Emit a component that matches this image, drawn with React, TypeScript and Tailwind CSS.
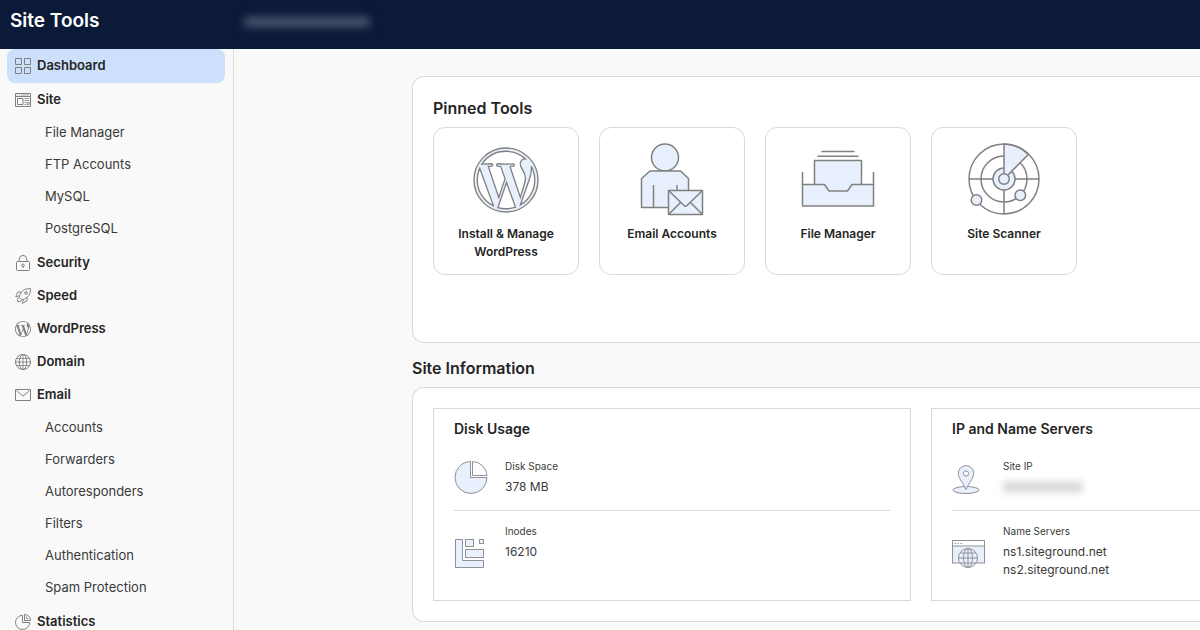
import type { ReactNode } from "react";
import { SiWordpress } from "react-icons/si";

const LINE = "#808080";
const TINT = "#e8f0fd";

type NavItem = {
  label: string;
  icon: ReactNode;
  active?: boolean;
  children?: string[];
};

/* Sidebar icons */

function SmallIcon({ children }: { children: ReactNode }) {
  return (
    <svg
      width="16"
      height="16"
      viewBox="0 0 16 16"
      fill="none"
      stroke={LINE}
      strokeWidth="1"
      strokeLinejoin="round"
      aria-hidden="true"
    >
      {children}
    </svg>
  );
}

const NAV: NavItem[] = [
  {
    label: "Dashboard",
    active: true,
    icon: (
      <SmallIcon>
        <rect x="0.5" y="0.5" width="6" height="6" />
        <rect x="9.5" y="0.5" width="6" height="6" />
        <rect x="0.5" y="9.5" width="6" height="6" />
        <rect x="9.5" y="9.5" width="6" height="6" />
      </SmallIcon>
    ),
  },
  {
    label: "Site",
    children: ["File Manager", "FTP Accounts", "MySQL", "PostgreSQL"],
    icon: (
      <SmallIcon>
        <rect x="0.5" y="1.5" width="15" height="13" />
        <path d="M0.5 4.5h15" />
        <path d="M2 3h1M4 3h1M6 3h8" strokeWidth="0.7" />
        <rect x="2.5" y="6.5" width="5.5" height="6" />
        <path d="M9.5 6.5H14M9.5 8.5H14M9.5 10.5h2M9.5 12.5h2" strokeWidth="0.8" />
        <rect x="12.3" y="10.3" width="1.9" height="2.3" strokeWidth="0.8" />
      </SmallIcon>
    ),
  },
  {
    label: "Security",
    icon: (
      <SmallIcon>
        <rect x="1.5" y="6.5" width="13" height="9" rx="1" />
        <path d="M4.2 6.5V4.2a3.8 3.8 0 0 1 7.6 0v2.3" />
        <circle cx="8" cy="10.3" r="1.3" />
        <path d="M8 11.6v1.6" />
      </SmallIcon>
    ),
  },
  {
    label: "Speed",
    icon: (
      <SmallIcon>
        <path d="M15.4 0.6c-3.8-.2-6.7.8-8.9 3.6C4.9 6.2 4.3 8.7 4.3 9.5L6.6 11.8c1.7-.2 3.8-.9 5.6-2.6 2.5-2.3 3.5-5.1 3.2-8.6z" />
        <circle cx="11" cy="5" r="1.3" />
        <path d="M6.5 4.2L3 4 0.7 8.6l1.5.3 1.1-1.2 1.1.6M12 9.3l.2 3.2-4.7 2.9-.4-1.5 1.4-1.3-.8-1" />
        <path d="M4.3 9.5c-1.4.2-2 1.4-1.7 4 2.3.2 3.7-.3 4-1.7" />
      </SmallIcon>
    ),
  },
  {
    label: "WordPress",
    icon: <SiWordpress size={16} color={LINE} aria-hidden="true" />,
  },
  {
    label: "Domain",
    icon: (
      <SmallIcon>
        <circle cx="8" cy="8" r="7.5" />
        <ellipse cx="8" cy="8" rx="3.7" ry="7.5" />
        <path d="M1.5 4.5h13M0.5 8h15M1.5 11.5h13M8 0.5v15" strokeWidth="0.8" />
      </SmallIcon>
    ),
  },
  {
    label: "Email",
    children: [
      "Accounts",
      "Forwarders",
      "Autoresponders",
      "Filters",
      "Authentication",
      "Spam Protection",
    ],
    icon: (
      <SmallIcon>
        <rect x="0.5" y="2.5" width="15" height="11" />
        <path d="M1.5 3.5L8 9.2l6.5-5.7" />
      </SmallIcon>
    ),
  },
  {
    label: "Statistics",
    icon: (
      <SmallIcon>
        <path d="M7.5 1.3a7.1 7.1 0 1 0 7.2 7.2H7.5z" />
        <path d="M9.5 0.5v6h6a6 6 0 0 0-6-6z" />
        <path d="M11.5 2.5v2h2" strokeWidth="0.8" />
      </SmallIcon>
    ),
  },
];

/* Pinned tool icons */

function ToolIcon({ children }: { children: ReactNode }) {
  return (
    <svg
      width="80"
      height="80"
      viewBox="0 0 80 80"
      fill={TINT}
      stroke={LINE}
      strokeWidth="1.5"
      strokeLinejoin="round"
      aria-hidden="true"
    >
      {children}
    </svg>
  );
}

const TOOLS: { label: string; icon: ReactNode }[] = [
  {
    label: "Install & Manage WordPress",
    icon: (
      <span className="flex h-20 w-20 items-center justify-center pb-px">
        <SiWordpress
          size={64}
          fill={TINT}
          stroke={LINE}
          strokeWidth={0.5}
          className="overflow-visible"
          aria-hidden="true"
        />
      </span>
    ),
  },
  {
    label: "Email Accounts",
    icon: (
      <ToolIcon>
        <circle cx="33" cy="17.5" r="13.5" />
        <path d="M9.5 67.5v-29l8.5-7.5h30.5l8 7.5v29z" />
        <path d="M21.5 45v22.5M45 45v8" />
        <rect x="36.5" y="50.5" width="34" height="24" />
        <path
          d="M36.5 50.5L52 65.5q1.5 1.5 3 0L70.5 50.5M36.5 74.5L48.5 62.5M70.5 74.5L58.5 62.5"
          fill="none"
        />
      </ToolIcon>
    ),
  },
  {
    label: "File Manager",
    icon: (
      <ToolIcon>
        <path d="M23.5 11.5h33M19.5 16.3h41" />
        <path d="M16.5 60V20.5h47V60z" />
        <path d="M4.5 44.5h22l4.5 6.5h18.5l4.5-6.5h21.5V66h-71z" />
        <path d="M4.5 32v13M75.5 32v13" />
      </ToolIcon>
    ),
  },
  {
    label: "Site Scanner",
    icon: (
      <ToolIcon>
        <circle cx="40" cy="39" r="35" fill="none" />
        <circle cx="40" cy="39" r="23" fill="none" />
        <path d="M5 39h70M40 39v35" />
        <circle cx="40" cy="39" r="11" />
        <path d="M40 39V4a35 35 0 0 1 24.300 10.500z" />
        <circle cx="40" cy="39" r="5.3" />
        <circle cx="12.5" cy="60" r="5.3" />
        <circle cx="56.3" cy="55.3" r="5.3" />
      </ToolIcon>
    ),
  },
];

/* Site information icons */

function InfoIcon({ children }: { children: ReactNode }) {
  return (
    <svg
      width="34"
      height="34"
      viewBox="0 0 34 34"
      fill={TINT}
      stroke="#8f9196"
      strokeWidth="1"
      className="shrink-0 self-center"
      aria-hidden="true"
    >
      {children}
    </svg>
  );
}

const DiskIcon = (
  <InfoIcon>
    <path d="M16.5 1.5a16 16 0 1 0 16.5 16H16.5z" />
    <path d="M18.5 1.5v14H33a15 15 0 0 0-14.5-14z" fill="#fff" />
  </InfoIcon>
);

const InodesIcon = (
  <InfoIcon>
    <path d="M1.5 5.5h7v21h21v7h-28z" />
    <rect x="11.5" y="5.5" width="8" height="7" />
    <rect x="25.5" y="5.5" width="4" height="4" />
    <rect x="11.5" y="15.5" width="18" height="8" />
  </InfoIcon>
);

const PinIcon = (
  <InfoIcon>
    <ellipse cx="14" cy="30" rx="13" ry="3.5" />
    <path d="M14 29.5C12.5 25 6.3 18.5 6.3 13.3a7.7 7.7 0 0 1 15.4 0C21.7 18.5 15.5 25 14 29.5z" />
    <circle cx="14" cy="13.5" r="2.6" fill="#fff" />
  </InfoIcon>
);

const ServerIcon = (
  <InfoIcon>
    <rect x="0.5" y="6.5" width="32" height="22.5" />
    <path d="M0.5 6.5h32v5.5h-32z" fill="#fff" />
    <path d="M2.5 9.5h1.5M5.5 9.5h1.5M8.5 9.5h1.5" />
    <circle cx="16" cy="24" r="9.5" />
    <ellipse cx="16" cy="24" rx="4.5" ry="9.5" fill="none" />
    <path d="M16 14.5v19M6.5 24h19M8.3 19h15.4M8.3 29h15.4" />
  </InfoIcon>
);

function Sidebar() {
  return (
    <nav className="w-[234px] shrink-0 overflow-hidden border-r border-[#dcdcdc] pr-2 pl-[7px]">
      <ul>
        {NAV.map((item) => (
          <li key={item.label}>
            <a
              href="#"
              className={
                item.active
                  ? "flex h-[34px] items-center gap-1.5 rounded-lg bg-[#cde0fb] px-2 text-[13px] font-semibold"
                  : item.children
                    ? "flex h-[34px] items-center gap-1.5 px-2 text-[13px] font-semibold"
                    : "flex h-[33px] items-center gap-1.5 px-2 text-[13px] font-semibold"
              }
            >
              {item.icon}
              {item.label}
            </a>
            {item.children && (
              <ul className="pb-px">
                {item.children.map((child) => (
                  <li key={child}>
                    <a
                      href="#"
                      className="flex h-8 items-center pl-[38px] text-[13px] text-[#3a3a3a]"
                    >
                      {child}
                    </a>
                  </li>
                ))}
              </ul>
            )}
          </li>
        ))}
      </ul>
    </nav>
  );
}

function InfoPanel({
  title,
  className,
  children,
}: {
  title: string;
  className: string;
  children: ReactNode;
}) {
  return (
    <section className={`flex flex-col border-[#d9d9d9] pt-[9px] pl-5 ${className}`}>
      <h3 className="mb-1.5 text-sm leading-[22px] font-semibold">{title}</h3>
      {children}
    </section>
  );
}

function InfoRow({
  icon,
  label,
  last,
  children,
}: {
  icon: ReactNode;
  label: string;
  last?: boolean;
  children: ReactNode;
}) {
  return (
    <div
      className={
        last
          ? "flex flex-1 gap-[17px] pt-3 pb-[21px]"
          : "flex gap-[17px] border-b border-[#d9d9d9] pt-3 pb-[14px]"
      }
    >
      {icon}
      <dl className="text-[#3a3a3a]">
        <dt className="mb-1 text-[10px] leading-4">{label}</dt>
        {children}
      </dl>
    </div>
  );
}

export default function App() {
  return (
    <div className="flex h-screen flex-col overflow-hidden bg-[#f9f9f9] font-['Inter',sans-serif] text-[#252525]">
      <header className="flex h-[49px] shrink-0 items-center bg-[#0b1a38] pb-1.5 pl-2.5">
        <h1 className="w-[234px] text-[19px] font-semibold text-white">Site Tools</h1>
        <div className="h-2.5 w-[126px] rounded-sm bg-[#4b5671] blur-[4px]" />
      </header>

      <div className="flex min-h-0 flex-1">
        <Sidebar />

        <main className="min-w-0 flex-1 overflow-hidden pt-[27px] pl-[178px]">
          <section className="rounded-l-xl border border-r-0 border-[#d9d9d9] bg-white pt-5 pb-[67px] pl-5">
            <h2 className="mb-2 text-base leading-[22px] font-semibold">Pinned Tools</h2>
            <div className="flex gap-5">
              {TOOLS.map((tool) => (
                <button
                  key={tool.label}
                  type="button"
                  className="flex h-[148px] w-[146px] cursor-pointer flex-col items-center rounded-xl border border-[#d9d9d9] px-4 pt-3"
                >
                  {tool.icon}
                  <span className="mt-[5px] text-xs leading-[18px] font-semibold">
                    {tool.label}
                  </span>
                </button>
              ))}
            </div>
          </section>

          <h2 className="mt-[14px] mb-2 text-base leading-[22px] font-semibold">
            Site Information
          </h2>
          <section className="flex gap-5 rounded-l-xl border border-r-0 border-[#d9d9d9] bg-white py-5 pl-5">
            <InfoPanel title="Disk Usage" className="w-[478px] shrink-0 border pr-5">
              <InfoRow icon={DiskIcon} label="Disk Space">
                <dd className="text-xs leading-[18px]">378 MB</dd>
              </InfoRow>
              <InfoRow icon={InodesIcon} label="Inodes" last>
                <dd className="text-xs leading-[18px]">16210</dd>
              </InfoRow>
            </InfoPanel>

            <InfoPanel
              title="IP and Name Servers"
              className="min-w-0 flex-1 border border-r-0"
            >
              <InfoRow icon={PinIcon} label="Site IP">
                <dd className="flex h-[18px] items-center">
                  <span className="h-3 w-20 bg-[#dcdcdc] blur-[3px]" />
                </dd>
              </InfoRow>
              <InfoRow icon={ServerIcon} label="Name Servers" last>
                <dd className="text-xs leading-[18px]">ns1.siteground.net</dd>
                <dd className="text-xs leading-[18px]">ns2.siteground.net</dd>
              </InfoRow>
            </InfoPanel>
          </section>
        </main>
      </div>
    </div>
  );
}
